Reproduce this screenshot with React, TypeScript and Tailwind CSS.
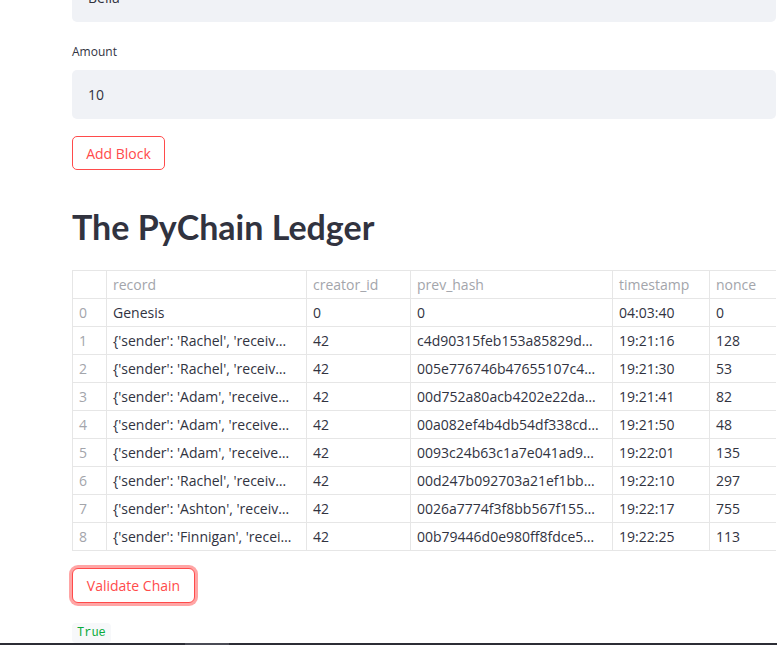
const cols = "grid grid-cols-[34px_200px_104px_202px_97px_67px]"

const rows = [
  ["0", "Genesis", "0", "0", "04:03:40", "0"],
  ["1", "{'sender': 'Rachel', 'receiv…", "42", "c4d90315feb153a85829d…", "19:21:16", "128"],
  ["2", "{'sender': 'Rachel', 'receiv…", "42", "005e776746b47655107c4…", "19:21:30", "53"],
  ["3", "{'sender': 'Adam', 'receive…", "42", "00d752a80acb4202e22da…", "19:21:41", "82"],
  ["4", "{'sender': 'Adam', 'receive…", "42", "00a082ef4b4db54df338cd…", "19:21:50", "48"],
  ["5", "{'sender': 'Adam', 'receive…", "42", "0093c24b63c1a7e041ad9…", "19:22:01", "135"],
  ["6", "{'sender': 'Rachel', 'receiv…", "42", "00d247b092703a21ef1bb…", "19:22:10", "297"],
  ["7", "{'sender': 'Ashton', 'receiv…", "42", "0026a7774f3f8bb567f155…", "19:22:17", "755"],
  ["8", "{'sender': 'Finnigan', 'recei…", "42", "00b79446d0e980ff8fdce5…", "19:22:25", "113"],
]

const headers = ["", "record", "creator_id", "prev_hash", "timestamp", "nonce"]

function Cell({ text, muted, last }: { text: string; muted?: boolean; last?: boolean }) {
  return (
    <div
      className={
        "whitespace-nowrap overflow-hidden pl-[6px] leading-[27px] " +
        (last ? "" : "border-r border-[#e6e6e6] ") +
        (muted ? "text-[#a3a5ab]" : "text-[#31333f]")
      }
    >
      {text}
    </div>
  )
}

function LedgerTable() {
  return (
    <div className="mt-[19px] border-t border-l border-[#e6e6e6] text-[14px]">
      <div className={cols + " h-[28px] border-b border-[#e6e6e6]"}>
        {headers.map((h, i) => (
          <Cell key={i} text={h} muted last={i == 5} />
        ))}
      </div>
      {rows.map((r) => (
        <div key={r[0]} className={cols + " h-[28px] border-b border-[#e6e6e6]"}>
          {r.map((c, i) => (
            <Cell key={i} text={c} muted={i == 0} last={i == 5} />
          ))}
        </div>
      ))}
    </div>
  )
}

export default function App() {
  return (
    <div className="min-h-[645px] bg-white overflow-hidden font-['Open_Sans',sans-serif] text-[#31333f]">
      <div className="pl-[72px] pr-px">
        <div className="-mt-[27px] h-[49px] rounded-[5px] bg-[#f0f2f6] flex items-center pl-4 text-[14px]">
          Bella
        </div>

        <div className="mt-[17px] h-[26px] leading-[26px] text-[12px]">Amount</div>
        <div className="mt-[5px] h-[49px] rounded-[5px] bg-[#f0f2f6] flex items-center pl-4 text-[14px]">
          10
        </div>

        <button className="mt-[17px] block h-[34px] w-[93px] rounded-[5px] border border-[#ff4b4b] bg-white text-[14px] text-[#ff4b4b]">
          Add Block
        </button>

        <h1 className="mt-[33px] h-[48px] leading-[48px] font-['Lato',sans-serif] text-[34px] font-bold text-[#31333f]">
          The PyChain Ledger
        </h1>

        <LedgerTable />

        <button className="mt-[17px] block h-[35px] w-[123px] rounded-[6px] border border-[#ff4b4b] bg-white text-[14px] text-[#ff4b4b] shadow-[0_0_0_3px_rgba(255,75,75,0.5)]">
          Validate Chain
        </button>

        <div className="mt-[20px] inline-flex h-[20px] items-center rounded-[4px] bg-[#f7f8fa] px-[5px] font-['Liberation_Mono',monospace] text-[12px] text-[#09ab3b]">
          True
        </div>
      </div>

      <div className="fixed bottom-0 left-0 right-0 flex h-[2px] bg-[#2c2d35]">
        <div className="ml-[185px] w-[44px] bg-[#4a4b55]" />
      </div>
    </div>
  )
}
